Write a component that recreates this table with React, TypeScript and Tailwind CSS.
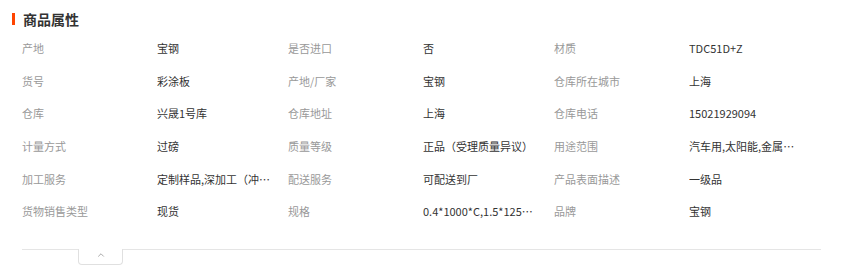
import { ChevronUp } from "lucide-react";

const rows: [string, string][][] = [
  [["产地", "宝钢"], ["是否进口", "否"], ["材质", "TDC51D+Z"]],
  [["货号", "彩涂板"], ["产地/厂家", "宝钢"], ["仓库所在城市", "上海"]],
  [["仓库", "兴晟1号库"], ["仓库地址", "上海"], ["仓库电话", "15021929094"]],
  [["计量方式", "过磅"], ["质量等级", "正品（受理质量异议）"], ["用途范围", "汽车用,太阳能,金属制品,家电"]],
  [["加工服务", "定制样品,深加工（冲压）"], ["配送服务", "可配送到厂"], ["产品表面描述", "一级品"]],
  [["货物销售类型", "现货"], ["规格", "0.4*1000*C,1.5*1250*C"], ["品牌", "宝钢"]],
];

export default function App() {
  return (
    <div
      className="w-[843px] h-[273px] bg-white overflow-hidden text-[11px]"
      style={{ fontFamily: '"Microsoft YaHei", "Noto Sans CJK SC", sans-serif' }}
    >
      <div className="flex items-center pl-[12px] pt-[11px] h-[26px]">
        <span className="w-[3px] h-[12px] bg-[#ff4400]" />
        <h2 className="ml-[8px] text-[14px] font-bold text-[#333] leading-[14px]">商品属性</h2>
      </div>

      <div className="pl-[22px] pt-[6px]">
        {rows.map((row, i) => (
          <div key={i} className="grid grid-cols-[135px_131px_135px_131px_135px_131px] h-[32.6px] items-center leading-[16px]">
            {row.flatMap(([label, value]) => [
              <span key={label} className="text-[#999]">{label}</span>,
              <span key={label + "v"} className="text-[#333] truncate max-w-[114px]">{value}</span>,
            ])}
          </div>
        ))}
      </div>

      <div className="mx-[22px] mt-[21px] border-t border-[#e5e5e5]">
        <div className="ml-[56px] -mt-px w-[45px] h-[16px] bg-white border border-t-0 border-[#e0e0e0] rounded-b-[4px] flex items-start justify-center">
          <ChevronUp className="w-[10px] h-[10px] mt-[1px] text-[#999]" strokeWidth={2} />
        </div>
      </div>
    </div>
  );
}
